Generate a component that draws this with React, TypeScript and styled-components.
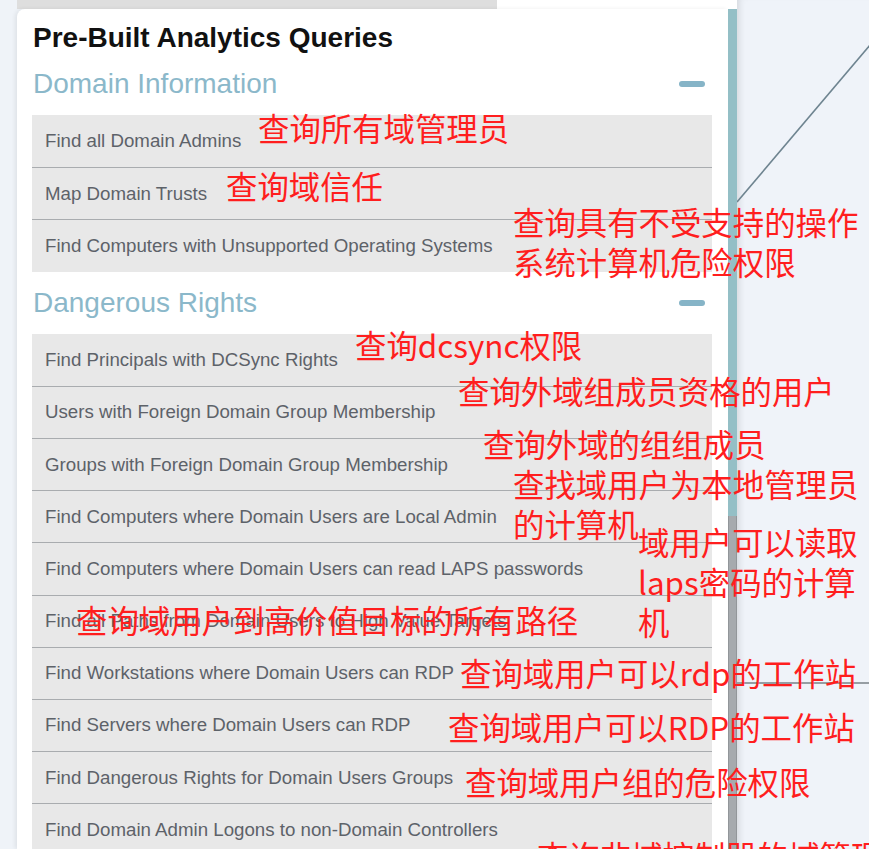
import React from 'react';
import styled, { createGlobalStyle } from 'styled-components';

const GlobalStyle = createGlobalStyle`
  html, body {
    margin: 0;
    padding: 0;
    height: 849px;
    overflow: hidden;
    background: #eff3f8;
    font-family: "Liberation Sans", Arial, sans-serif;
  }
`;

const Page = styled.div`
  position: relative;
  display: flex;
  height: 849px;
  overflow: hidden;
`;

const Sidebar = styled.div`
  margin-left: 17px;
  width: 720px;
  display: flex;
  flex-direction: column;
  flex-shrink: 0;
`;

const TopStrip = styled.div`
  display: flex;
  height: 9px;
  flex-shrink: 0;
`;

const StripTab = styled.div`
  width: 480px;
  background: #dedede;
`;

const StripRest = styled.div`
  flex: 1;
  background: #fff;
`;

const Body = styled.div`
  flex: 1;
  display: flex;
  min-height: 0;
`;

const Panel = styled.div`
  flex: 1;
  background: #fff;
  border-top-left-radius: 8px;
  padding: 13px 16px 0 15px;
  box-shadow: -2px 0 4px rgba(0, 0, 0, 0.07);
  overflow: hidden;
`;

const Title = styled.h2`
  margin: 0 0 0 1px;
  font-size: 28px;
  line-height: 31px;
  font-weight: 700;
  color: #111;
`;

const SectionHeader = styled.div`
  display: flex;
  align-items: center;
  justify-content: space-between;
  height: 62px;
`;

const SectionName = styled.span`
  font-size: 28px;
  color: #8bb8ca;
  padding-left: 1px;
`;

const Collapse = styled.span`
  width: 26px;
  height: 6px;
  border-radius: 3px;
  background: #86b4c7;
  margin-right: 7px;
`;

const List = styled.div`
  background: #e8e8e8;
`;

const Row = styled.div`
  box-sizing: border-box;
  height: 52.2px;
  display: flex;
  align-items: center;
  padding-left: 13px;
  font-size: 18.7px;
  color: #5d6269;
  white-space: nowrap;

  & + & {
    border-top: 1.5px solid #a9acaf;
  }
`;

const Scrollbar = styled.div`
  width: 9px;
  display: flex;
  flex-direction: column;
  flex-shrink: 0;
`;

const ScrollTrack = styled.div<{ $size: number }>`
  flex: 0 0 ${(p) => p.$size}px;
  background: #94bfc6;
`;

const ScrollThumb = styled.div`
  flex: 1;
  background: #a6aaae;
  border-left: 1px solid #92969a;
  border-right: 1px solid #92969a;
`;

const Canvas = styled.div`
  position: relative;
  flex: 1;
  background: #eff3f9;
  box-shadow: inset 7px 0 7px -5px rgba(0, 0, 0, 0.12);
`;

const Edges = styled.svg`
  position: absolute;
  inset: 0;
  width: 100%;
  height: 100%;
`;

const Notes = styled.div`
  position: absolute;
  inset: 0;
  pointer-events: none;
`;

const Note = styled.div<{ $x: number; $y: number }>`
  position: absolute;
  left: ${(p) => p.$x}px;
  top: ${(p) => p.$y}px;
  font-family: "Noto Sans CJK SC", "Noto Sans", sans-serif;
  font-size: 31.4px;
  line-height: 40px;
  color: #ff1e1e;
  white-space: pre;
`;

const sections = [
  {
    name: 'Domain Information',
    items: [
      'Find all Domain Admins',
      'Map Domain Trusts',
      'Find Computers with Unsupported Operating Systems',
    ],
  },
  {
    name: 'Dangerous Rights',
    items: [
      'Find Principals with DCSync Rights',
      'Users with Foreign Domain Group Membership',
      'Groups with Foreign Domain Group Membership',
      'Find Computers where Domain Users are Local Admin',
      'Find Computers where Domain Users can read LAPS passwords',
      'Find all Paths from Domain Users to High Value Targets',
      'Find Workstations where Domain Users can RDP',
      'Find Servers where Domain Users can RDP',
      'Find Dangerous Rights for Domain Users Groups',
      'Find Domain Admin Logons to non-Domain Controllers',
    ],
  },
];

const notes = [
  { x: 258, y: 108, text: '查询所有域管理员' },
  { x: 226, y: 166, text: '查询域信任' },
  { x: 513, y: 202, text: '查询具有不受支持的操作\n系统计算机危险权限' },
  { x: 355, y: 325, text: '查询dcsync权限' },
  { x: 458, y: 371, text: '查询外域组成员资格的用户' },
  { x: 483, y: 424, text: '查询外域的组组成员' },
  { x: 513, y: 464, text: '查找域用户为本地管理员\n的计算机' },
  { x: 638, y: 522, text: '域用户可以读取\nlaps密码的计算\n机' },
  { x: 76, y: 600, text: '查询域用户到高价值目标的所有路径' },
  { x: 460, y: 653, text: '查询域用户可以rdp的工作站' },
  { x: 448, y: 707, text: '查询域用户可以RDP的工作站' },
  { x: 465, y: 762, text: '查询域用户组的危险权限' },
  { x: 537, y: 836, text: '查询非域控制器的域管理员登录' },
];

const App: React.FC = () => {
  return (
    <>
      <GlobalStyle />
      <Page>
        <Sidebar>
          <TopStrip>
            <StripTab />
            <StripRest />
          </TopStrip>
          <Body>
            <Panel>
              <Title>Pre-Built Analytics Queries</Title>
              {sections.map((s) => (
                <React.Fragment key={s.name}>
                  <SectionHeader>
                    <SectionName>{s.name}</SectionName>
                    <Collapse />
                  </SectionHeader>
                  <List>
                    {s.items.map((item) => (
                      <Row key={item}>{item}</Row>
                    ))}
                  </List>
                </React.Fragment>
              ))}
            </Panel>
            <Scrollbar>
              <ScrollTrack $size={507} />
              <ScrollThumb />
            </Scrollbar>
          </Body>
        </Sidebar>
        <Canvas>
          <Edges>
            <line x1="0" y1="202" x2="134" y2="44" stroke="#6e8490" strokeWidth="1.6" />
            <line x1="0" y1="683" x2="140" y2="683" stroke="#969da3" strokeWidth="2" />
          </Edges>
        </Canvas>
        <Notes>
          {notes.map((n) => (
            <Note key={n.text} $x={n.x} $y={n.y}>
              {n.text}
            </Note>
          ))}
        </Notes>
      </Page>
    </>
  );
};

export default App;
